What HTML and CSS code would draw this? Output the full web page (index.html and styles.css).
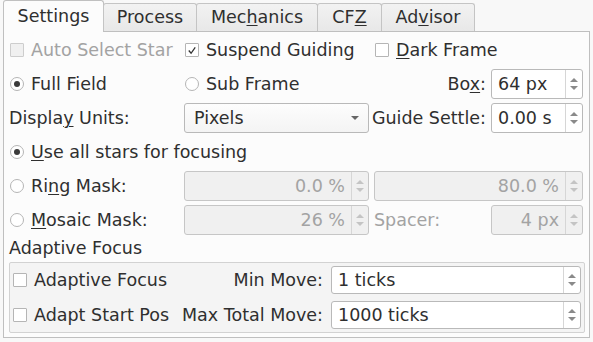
FILE: index.html
```html
<!DOCTYPE html>
<html lang="en">
<head>
    <meta charset="UTF-8">
    <title>Focus Settings</title>
    <link rel="stylesheet" href="styles.css">
</head>
<body>
    <div class="tabs">
        <div class="tab active">Settings</div>
        <div class="tab">Process</div>
        <div class="tab">Mec<u>h</u>anics</div>
        <div class="tab">CF<u>Z</u></div>
        <div class="tab">Ad<u>v</u>isor</div>
    </div>
    <div class="panel">
        <div class="grid">
            <!-- row 1 -->
            <label class="chk disabled"><span class="box"></span><span>Auto Select Star</span></label>
            <label class="chk"><span class="box on"><svg viewBox="0 0 13 13" width="13" height="13"><polyline points="3,6.5 5.5,9.5 10,3" fill="none" stroke="#333" stroke-width="1.4"/></svg></span><span>Suspend Guiding</span></label>
            <label class="chk span2"><span class="box"></span><span><u>D</u>ark Frame</span></label>

            <!-- row 2 -->
            <label class="chk"><span class="radio on"></span><span>Full Field</span></label>
            <label class="chk"><span class="radio"></span><span>Sub Frame</span></label>
            <div class="lbl right"><span>Bo<u>x</u>:</span></div>
            <div class="spin"><span class="val">64 px</span><span class="btns"><i class="up"></i><i class="dn"></i></span></div>

            <!-- row 3 -->
            <div class="lbl"><span>Displa<u>y</u> Units:</span></div>
            <div class="combo"><span class="val">Pixels</span><i class="dn"></i></div>
            <div class="lbl right"><span>Guide Settle:</span></div>
            <div class="spin"><span class="val">0.00 s</span><span class="btns"><i class="up"></i><i class="dn"></i></span></div>

            <!-- row 4 -->
            <label class="chk span4"><span class="radio on"></span><span><u>U</u>se all stars for focusing</span></label>

            <!-- row 5 -->
            <label class="chk"><span class="radio"></span><span>Ri<u>n</u>g Mask:</span></label>
            <div class="spin off"><span class="val">0.0 %</span><span class="btns"><i class="up"></i><i class="dn"></i></span></div>
            <div class="spin off span2"><span class="val">80.0 %</span><span class="btns"><i class="up"></i><i class="dn"></i></span></div>

            <!-- row 6 -->
            <label class="chk"><span class="radio"></span><span><u>M</u>osaic Mask:</span></label>
            <div class="spin off"><span class="val">26 %</span><span class="btns"><i class="up"></i><i class="dn"></i></span></div>
            <div class="lbl disabled"><span>Spacer:</span></div>
            <div class="spin off"><span class="val">4 px</span><span class="btns"><i class="up"></i><i class="dn"></i></span></div>

            <!-- row 7 -->
            <div class="lbl span4 heading"><span>Adaptive Focus</span></div>
        </div>

        <div class="group">
            <label class="chk"><span class="box"></span><span>Adaptive Focus</span></label>
            <div class="lbl right"><span>Min Move:</span></div>
            <div class="spin"><span class="val">1 ticks</span><span class="btns"><i class="up"></i><i class="dn"></i></span></div>

            <label class="chk"><span class="box"></span><span>Adapt Start Pos</span></label>
            <div class="lbl right"><span>Max Total Move:</span></div>
            <div class="spin"><span class="val">1000 ticks</span><span class="btns"><i class="up"></i><i class="dn"></i></span></div>
        </div>
    </div>
</body>
</html>
```

FILE: styles.css
```css
body {
    margin: 0;
    padding: 0 3px;
    background: #f8f8f8;
    font-family: "DejaVu Sans", sans-serif;
    font-size: 17.5px;
    color: #2f2f2f;
    width: 587px;
}
u {
    text-decoration-thickness: 1px;
    text-underline-offset: 2px;
}
.tabs {
    display: flex;
    align-items: flex-end;
    height: 31px;
    position: relative;
    z-index: 1;
}
.tab {
    box-sizing: border-box;
    height: 28px;
    line-height: 26px;
    padding: 0 10px;
    border: 1px solid #c4c4c4;
    border-bottom: none;
    border-radius: 3px 3px 0 0;
    background: linear-gradient(#f2f2f2, #e8e8e8);
    margin-left: -1px;
    text-align: center;
    white-space: nowrap;
}
.tab:nth-child(2) { width: 94px; }
.tab:nth-child(3) { width: 122px; }
.tab:nth-child(4) { width: 65px; }
.tab:nth-child(5) { width: 94px; }
.tab.active {
    margin-left: 0;
    width: 101px;
    height: 32px;
    line-height: 30px;
    margin-bottom: -1px;
    background: #fcfcfc;
    border-color: #c0c0c0;
    padding-bottom: 3px;
}
.panel {
    box-sizing: border-box;
    height: 307px;
    border: 1px solid #bfbfbf;
    background: #fcfcfc;
    padding: 3px 4px 0 5px;
}
.grid {
    display: grid;
    grid-template-columns: 170px 185px 112px 92px;
    grid-template-rows: repeat(6, 30px) 19px;
    column-gap: 5px;
    row-gap: 4px;
    align-items: center;
    margin-bottom: 4px;
}
.grid .heading {
    line-height: 19px;
}
.span2 { grid-column: span 2; }
.span4 { grid-column: span 4; }
.chk, .lbl {
    display: flex;
    align-items: center;
    white-space: nowrap;
}
.right { justify-content: flex-end; }
.disabled { color: #a3a3a3; }
.box, .radio {
    box-sizing: border-box;
    width: 14px;
    height: 14px;
    border: 1px solid #b5b5b5;
    background: #fff;
    margin: 0 7px 0 1px;
    flex: none;
    display: flex;
    align-items: center;
    justify-content: center;
}
.box { border-radius: 1px; }
.box svg { display: block; }
.disabled .box { background: #f0f0f0; border-color: #cdcdcd; }
.radio { border-radius: 50%; }
.radio.on::after {
    content: "";
    width: 6px;
    height: 6px;
    border-radius: 50%;
    background: #3a3a3a;
}
.spin, .combo {
    box-sizing: border-box;
    height: 30px;
    border: 1px solid #b9b9b9;
    border-radius: 3px;
    background: #fff;
    display: flex;
    align-items: stretch;
}
.spin .val {
    flex: 1;
    display: flex;
    align-items: center;
    padding: 0 6px;
}
.btns {
    width: 16px;
    border-left: 1px solid #d6d6d6;
    display: flex;
    flex-direction: column;
    align-items: center;
    justify-content: center;
    gap: 4px;
}
.up, .dn {
    width: 0;
    height: 0;
    border-left: 4px solid transparent;
    border-right: 4px solid transparent;
}
.up { border-bottom: 4px solid #8a8a8a; }
.dn { border-top: 4px solid #8a8a8a; }
.spin.off {
    background: #f0f0f0;
    border-color: #c6c6c6;
    color: #a3a3a3;
}
.spin.off .val { justify-content: flex-end; }
.spin.off .up { border-bottom-color: #c4c4c4; }
.spin.off .dn { border-top-color: #c4c4c4; }
.combo {
    background: linear-gradient(#fdfdfd, #f4f4f4);
    align-items: center;
    padding: 0 9px;
}
.combo .val { flex: 1; }
.combo .dn { border-top-color: #666; }
.group {
    box-sizing: border-box;
    width: 576px;
    height: 71px;
    border: 1px solid #d2d2d2;
    border-radius: 2px;
    background: #f4f4f4;
    padding: 3px 3px 0 2px;
    display: grid;
    grid-template-columns: auto 1fr 250px;
    grid-auto-rows: 28px;
    row-gap: 7px;
    column-gap: 8px;
    align-items: center;
}
.group .spin { height: 28px; }
```
